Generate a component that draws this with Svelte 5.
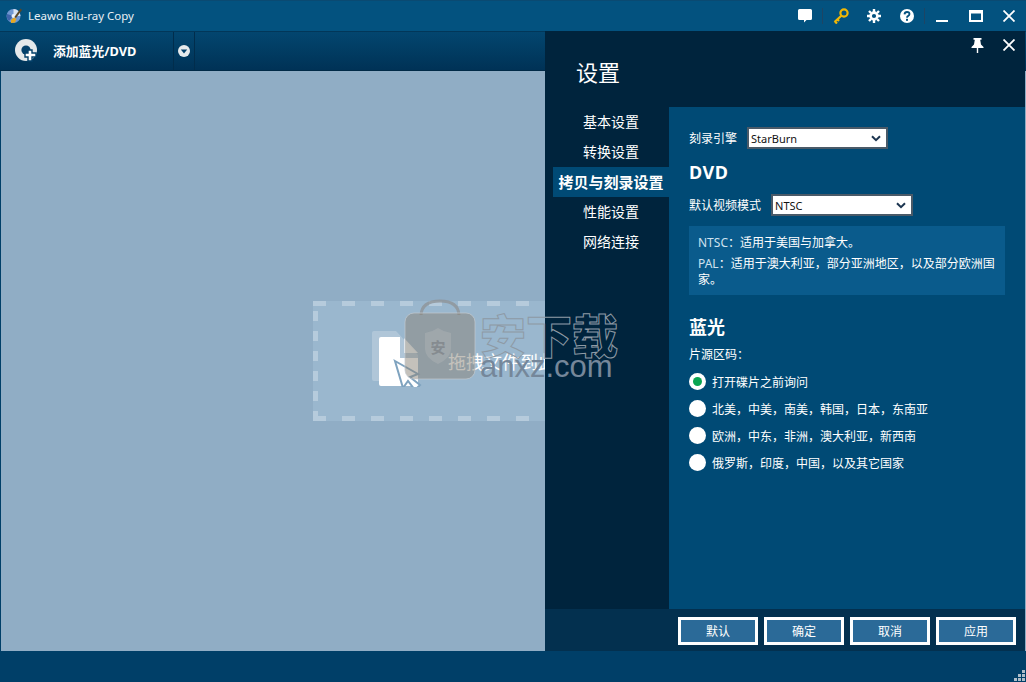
<script>
	const navItems = ['基本设置', '转换设置', '拷贝与刻录设置', '性能设置', '网络连接'];
	const regions = [
		'打开碟片之前询问',
		'北美，中美，南美，韩国，日本，东南亚',
		'欧洲，中东，非洲，澳大利亚，新西南',
		'俄罗斯，印度，中国，以及其它国家'
	];
	const actions = ['默认', '确定', '取消', '应用'];
	let activeNav = $state(2);
	let region = $state(0);
</script>

{#snippet chevron()}
	<svg class="chevron" viewBox="0 0 10 7" width="10" height="7" aria-hidden="true">
		<path d="M1 1.2 L5 5.2 L9 1.2" fill="none" stroke="#1c3550" stroke-width="2" />
	</svg>
{/snippet}

<div class="window">
	<header class="titlebar">
		<div class="brand">
			<svg viewBox="0 0 16 16" width="16" height="16" aria-hidden="true">
				<circle cx="7.5" cy="8" r="7" fill="#6f97d2" />
				<path d="M7.5 1 A7 7 0 0 1 14.5 8 L7.5 8 Z" fill="#d7e2f2" />
				<path d="M1 6 L7.5 8 L3 13 A7 7 0 0 1 1 6 Z" fill="#3e64ab" />
				<circle cx="7.5" cy="8" r="2" fill="#eef3f9" />
				<path d="M14.5 0.5 L16 2 L10 10 L8.4 9 Z" fill="#5a4726" />
				<path d="M5 12 L8 9.6 L10.4 11 L9 14.6 L5 15 Z" fill="#e8a81e" />
			</svg>
			<span>Leawo Blu-ray Copy</span>
		</div>
		<div class="win-actions">
			<svg class="ico msg" viewBox="0 0 14 14" width="14" height="14" aria-hidden="true">
				<path d="M1.5 0 H12.5 Q14 0 14 1.5 V9.5 Q14 11 12.5 11 H8.5 L6 13.5 V11 H1.5 Q0 11 0 9.5 V1.5 Q0 0 1.5 0 Z" fill="#fff" />
			</svg>
			<i class="sep"></i>
			<svg class="ico key" viewBox="0 0 16 16" width="16" height="16" aria-hidden="true">
				<circle cx="11" cy="5" r="3.6" fill="none" stroke="#f2b705" stroke-width="2.2" />
				<path d="M8.3 7.7 L1.5 14 M2 13.5 L4 15.5 M4.5 11.5 L6 13" fill="none" stroke="#f2b705" stroke-width="2.2" />
			</svg>
			<svg class="ico gear" viewBox="0 0 14 14" width="14" height="14" aria-hidden="true">
				<circle cx="7" cy="7" r="3.4" fill="none" stroke="#fff" stroke-width="2.6" />
				<path d="M7 0 V3 M7 11 V14 M0 7 H3 M11 7 H14 M2 2 L4 4 M10 10 L12 12 M12 2 L10 4 M4 10 L2 12" stroke="#fff" stroke-width="2.4" />
			</svg>
			<svg class="ico help" viewBox="0 0 14 14" width="14" height="14" aria-hidden="true">
				<circle cx="7" cy="7" r="7" fill="#fff" />
				<path d="M4.5 5.4 Q4.7 3 7 3 Q9.5 3 9.5 5 Q9.5 6.2 8.2 6.9 Q7 7.5 7 8.8" fill="none" stroke="#04507e" stroke-width="1.8" />
				<rect x="6" y="9.8" width="2" height="2" fill="#04507e" />
			</svg>
			<i class="sep last"></i>
			<svg class="ico min" viewBox="0 0 13 13" width="13" height="13" aria-hidden="true">
				<rect x="0" y="10" width="12" height="2" fill="#fff" />
			</svg>
			<svg class="ico max" viewBox="0 0 14 12" width="14" height="12" aria-hidden="true">
				<path d="M1 2.5 H13 V11 H1 Z" fill="none" stroke="#fff" stroke-width="2" />
				<rect x="0" y="0" width="14" height="3" fill="#fff" />
			</svg>
			<svg class="ico close" viewBox="0 0 12 12" width="12" height="12" aria-hidden="true">
				<path d="M0.5 0.5 L11.5 11.5 M11.5 0.5 L0.5 11.5" stroke="#fff" stroke-width="1.8" />
			</svg>
		</div>
	</header>

	<div class="toolbar">
		<button class="add">
			<svg viewBox="0 0 23 23" width="23" height="23" aria-hidden="true">
				<circle cx="11" cy="11" r="11" fill="#e4e8ea" />
				<circle cx="11" cy="11" r="4.6" fill="#03406a" />
				<path d="M13 11 H17 V14 H21 V18 H17 V22 H13 V18 H10 V14 H13 Z" fill="#fff" stroke="#03406a" stroke-width="1.4" />
			</svg>
			<span>添加蓝光/DVD</span>
		</button>
		<button class="more" aria-label="更多">
			<svg viewBox="0 0 12 12" width="12" height="12" aria-hidden="true">
				<circle cx="6" cy="6" r="6" fill="#e6eaec" />
				<path d="M2.8 4.4 H9.2 L6 8.6 Z" fill="#03406a" />
			</svg>
		</button>
	</div>

	<main class="stage">
		<div class="drop">
			<svg class="doc" viewBox="0 0 54 56" width="54" height="56" aria-hidden="true">
				<path d="M2 0 H24 L46 24 V48 Q46 50 44 50 H2 Q0 50 0 48 V2 Q0 0 2 0 Z" fill="#fff" opacity=".22" />
				<path d="M9 6 H28 V27 H46 V53 Q46 55 44 55 H9 Q7 55 7 53 V8 Q7 6 9 6 Z" fill="#fff" />
				<path d="M32 7 L46 22 H32 Z" fill="#fff" opacity=".8" />
				<path d="M23 30 L46 43 L38 46 L48 54 L43 59 L36 50 L31 57 Z" fill="#fff" stroke="#7fa3bf" stroke-width="2" />
			</svg>
			<span class="hint">拖拽文件到此处</span>
		</div>
	</main>

	<footer class="statusbar">
		<svg viewBox="0 0 11 11" width="11" height="11" aria-hidden="true">
			<path d="M8 0h3v3H8zM4 4h3v3H4zM8 4h3v3H8zM0 8h3v3H0zM4 8h3v3H4zM8 8h3v3H8z" fill="#aebdc9" />
		</svg>
	</footer>

	<aside class="panel">
		<div class="panel-actions">
			<svg viewBox="0 0 13 15" width="13" height="15" aria-hidden="true">
				<path d="M2.5 0 H10.5 V1.8 H9.2 L10 6.5 L12.5 9 V10 H7.2 V15 H5.8 V10 H0.5 V9 L3 6.5 L3.8 1.8 H2.5 Z" fill="#fff" />
			</svg>
			<svg viewBox="0 0 12 12" width="12" height="12" aria-hidden="true">
				<path d="M0.5 0.5 L11.5 11.5 M11.5 0.5 L0.5 11.5" stroke="#fff" stroke-width="1.8" />
			</svg>
		</div>
		<h1>设置</h1>
		<div class="panel-body">
			<nav>
				{#each navItems as item, i}
					<button class:active={activeNav === i} onclick={() => (activeNav = i)}>{item}</button>
				{/each}
			</nav>
			<section class="content">
				<div class="field">
					<label for="engine">刻录引擎</label>
					<div class="select" id="engine"><span>StarBurn</span>{@render chevron()}</div>
				</div>
				<h2 class="dvd">DVD</h2>
				<div class="field mode">
					<label for="mode">默认视频模式</label>
					<div class="select" id="mode"><span>NTSC</span>{@render chevron()}</div>
				</div>
				<div class="info">
					<p><b>NTSC</b>：适用于美国与加拿大。</p>
					<p><b>PAL</b>：适用于澳大利亚，部分亚洲地区，以及部分欧洲国家。</p>
				</div>
				<h2 class="bluray">蓝光</h2>
				<p class="region-label">片源区码：</p>
				<div class="regions">
					{#each regions as item, i}
						<button class="radio" onclick={() => (region = i)}>
							<i class:on={region === i}></i>
							<span>{item}</span>
						</button>
					{/each}
				</div>
			</section>
		</div>
		<div class="panel-foot">
			{#each actions as action}
				<button>{action}</button>
			{/each}
		</div>
	</aside>

	<!-- download-site watermark stamped over the capture -->
	<div class="watermark" aria-hidden="true">
		<svg viewBox="0 0 72 82" width="72" height="82">
			<path d="M17 16 Q18 2 36 2 Q54 2 55 16" fill="none" stroke="#8f9499" stroke-width="3" opacity=".8" />
			<rect x="1" y="14" width="70" height="66" rx="9" fill="#8a8378" opacity=".5" />
			<rect x="1" y="14" width="70" height="66" rx="9" fill="none" stroke="#c3c9ce" stroke-width="1" opacity=".7" />
			<path d="M21 34 Q28 33 34 29 Q40 33 47 34 V50 Q47 59 34 65 Q21 59 21 50 Z" fill="#a9afb3" opacity=".55" />
			<text x="34" y="54" text-anchor="middle" font-size="15" font-weight="700" fill="#858b90">安</text>
		</svg>
		<div class="wm-text">
			<strong>安下载</strong>
			<span>anxz.com</span>
		</div>
	</div>
</div>

<style>
	:global(body) {
		margin: 0;
		background: #003f68;
	}

	.window {
		position: relative;
		display: flex;
		flex-direction: column;
		width: 1026px;
		height: 682px;
		overflow: hidden;
		background: #003f68;
		color: #fff;
		font-family: 'Noto Sans', 'Noto Sans CJK SC', sans-serif;
		font-size: 12px;
	}

	button {
		border: 0;
		padding: 0;
		background: none;
		color: inherit;
		font: inherit;
	}

	p,
	h1,
	h2 {
		margin: 0;
	}

	/* ===== Title bar ===== */
	.titlebar {
		display: flex;
		flex: 0 0 31px;
		align-items: center;
		justify-content: space-between;
		box-sizing: border-box;
		border-top: 1px solid #0a4a72;
		padding: 0 11px 0 6px;
		background: #03527f;
	}

	.brand {
		display: flex;
		align-items: center;
		gap: 6px;
		font-size: 11.5px;
		color: #e8f0f5;
	}

	.brand span {
		margin-top: -2px;
	}

	.win-actions {
		display: flex;
		align-items: center;
	}

	.sep {
		width: 1px;
		height: 16px;
		margin: 0 10px;
		background: #1d4564;
	}

	.sep.last {
		margin: 0 11px 0 10px;
	}

	.key {
		margin-right: 18px;
	}

	.gear {
		margin-right: 19px;
	}

	.min {
		margin-right: 20px;
	}

	.max {
		margin-right: 20px;
	}

	/* ===== Toolbar ===== */
	.toolbar {
		display: flex;
		flex: 0 0 40px;
		box-sizing: border-box;
		border-top: 1px solid #023759;
		border-bottom: 1px solid #012a47;
		background: linear-gradient(#03466f, #003256);
	}

	.add {
		display: flex;
		align-items: center;
		gap: 15px;
		width: 174px;
		box-sizing: border-box;
		padding: 0 0 2px 15px;
		border-right: 1px solid #012d4c;
		font-size: 12.8px;
		font-weight: 700;
	}

	.more {
		display: flex;
		align-items: center;
		justify-content: center;
		width: 21px;
		border-right: 1px solid #012d4c;
	}

	/* ===== Drop area ===== */
	.stage {
		display: flex;
		flex: 1;
		align-items: center;
		justify-content: center;
		margin-left: 1px;
		background: #90adc5;
	}

	.drop {
		display: flex;
		align-items: flex-start;
		box-sizing: border-box;
		width: 400px;
		height: 120px;
		margin-left: -1px;
		padding: 30px 0 0 59px;
		background-color: #9ab7ce;
		background-image:
			repeating-linear-gradient(90deg, #b6cbdc 0 13px, transparent 13px 29px),
			repeating-linear-gradient(90deg, #b6cbdc 0 13px, transparent 13px 29px),
			repeating-linear-gradient(0deg, #b6cbdc 0 10px, transparent 10px 20px),
			repeating-linear-gradient(0deg, #b6cbdc 0 10px, transparent 10px 20px);
		background-position: 0 0, 0 100%, 0 0, 100% 0;
		background-size: 100% 5px, 100% 5px, 5px 100%, 5px 100%;
		background-repeat: no-repeat;
	}

	.hint {
		margin: 19px 0 0 22px;
		font-size: 18px;
		line-height: 24px;
		white-space: nowrap;
	}

	/* ===== Status bar ===== */
	.statusbar {
		display: flex;
		flex: 0 0 31px;
		align-items: flex-end;
		justify-content: flex-end;
		box-sizing: border-box;
		padding: 0 1px 1px 0;
		background: #003f68;
	}

	/* ===== Settings panel ===== */
	.panel {
		position: absolute;
		top: 31px;
		right: 1px;
		bottom: 31px;
		display: flex;
		flex-direction: column;
		width: 480px;
		background: #00243d;
	}

	.panel-actions {
		display: flex;
		align-items: center;
		justify-content: flex-end;
		gap: 19px;
		height: 14px;
		padding: 7px 10px 0 0;
	}

	h1 {
		margin: 4px 0 0 31px;
		font-size: 22px;
		font-weight: 400;
		line-height: 32px;
	}

	.panel-body {
		display: flex;
		flex: 1;
		margin-top: 19px;
		min-height: 0;
	}

	nav {
		display: flex;
		flex-direction: column;
		flex: 0 0 116px;
		margin-left: 8px;
	}

	nav button {
		height: 30px;
		font-size: 14px;
		line-height: 30px;
		text-align: center;
	}

	nav button.active {
		background: #004a75;
		font-size: 15px;
		font-weight: 700;
	}

	.content {
		flex: 1;
		box-sizing: border-box;
		padding: 20px 20px 0;
		background: #004a75;
	}

	.field {
		display: flex;
		align-items: center;
		gap: 10px;
	}

	.select {
		display: flex;
		align-items: center;
		justify-content: space-between;
		box-sizing: border-box;
		width: 141px;
		height: 22px;
		padding: 0 5px 0 2px;
		border: 2px solid #4a5a68;
		background: #fff;
		color: #111;
		font-size: 11px;
	}

	.mode {
		margin-top: 10px;
	}

	.mode .select {
		width: 142px;
	}

	.dvd {
		margin-top: 12px;
		font-size: 18px;
		font-weight: 700;
		line-height: 23px;
		letter-spacing: 0.5px;
	}

	.info {
		box-sizing: border-box;
		width: 316px;
		height: 69px;
		margin-top: 10px;
		padding: 9px 9px 0;
		background: #0a5b8c;
		line-height: 16px;
	}

	.info p + p {
		margin-top: 5px;
	}

	.info b {
		font-weight: 400;
		color: #cfe2ef;
	}

	.bluray {
		margin-top: 21px;
		font-size: 18px;
		font-weight: 700;
		line-height: 22px;
	}

	.region-label {
		margin-top: 8px;
		line-height: 18px;
	}

	.regions {
		display: flex;
		flex-direction: column;
		margin-top: 4px;
	}

	.radio {
		display: flex;
		align-items: center;
		gap: 6px;
		height: 27px;
	}

	.radio i {
		position: relative;
		width: 17px;
		height: 17px;
		border-radius: 50%;
		background: #fff;
	}

	.radio i.on::after {
		content: '';
		position: absolute;
		inset: 4px;
		border-radius: 50%;
		background: #0aa552;
	}

	.panel-foot {
		display: flex;
		flex: 0 0 42px;
		align-items: center;
		justify-content: flex-end;
		gap: 6px;
		box-sizing: border-box;
		padding: 1px 9px 0 0;
		background: #03304f;
	}

	.panel-foot button {
		box-sizing: border-box;
		width: 80px;
		height: 28px;
		border: 3px solid #fff;
		background: #2b6a98;
	}

	/* ===== Watermark ===== */
	.watermark {
		position: absolute;
		top: 299px;
		left: 404px;
		display: flex;
		gap: 4px;
		pointer-events: none;
	}

	.wm-text {
		display: flex;
		flex-direction: column;
		margin-top: 8px;
	}

	.wm-text strong {
		font-family: 'Noto Sans CJK SC', sans-serif;
		font-size: 46px;
		font-weight: 900;
		line-height: 52px;
		color: transparent;
		-webkit-text-stroke: 1px #8e9aa5;
	}

	.wm-text span {
		margin-top: -5px;
		font-family: 'Liberation Sans', sans-serif;
		font-size: 31px;
		line-height: 26px;
		color: #75879a;
	}
</style>
